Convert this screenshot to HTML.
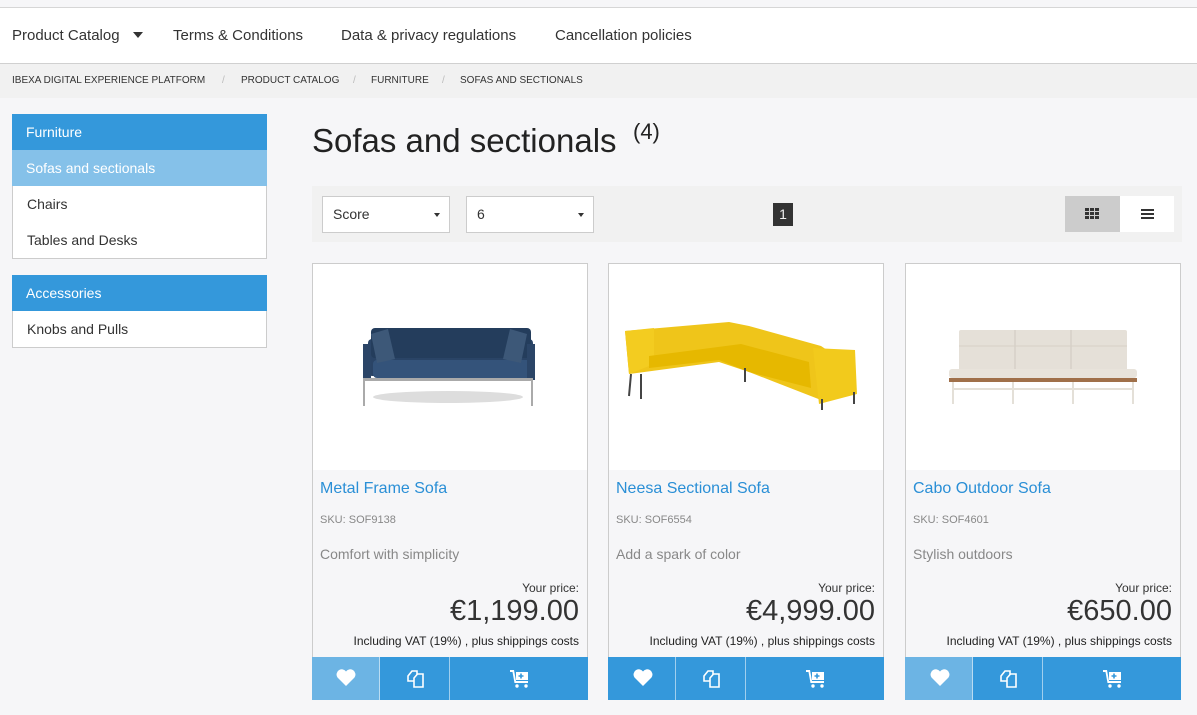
<!DOCTYPE html>
<html><head><meta charset="utf-8"><style>
*{box-sizing:border-box;margin:0;padding:0}
body{width:1197px;height:715px;overflow:hidden;background:#f6f6f8;font-family:"Liberation Sans",sans-serif;color:#333;position:relative}
.a{position:absolute}
.top{left:0;width:1197px;background:#fff;border-top:1px solid #d6d6d6;top:7px;height:57px;border-bottom:1px solid #d0d0d0}
.nav{top:27px;font-size:15px;color:#333}
.bc{left:0;top:64px;width:1197px;height:34px;background:#f1f1f1;font-size:10px;color:#333}
.bc span{position:absolute;top:11px}
.sl{color:#bbb}
.side{left:12px;width:255px;border:1px solid #ccc;border-top:none;background:#fff}
.side div{height:36px;line-height:36px;padding-left:14px;font-size:14px;color:#333}
.side .h{background:#3498db;color:#fff;margin:0 -1px;padding-left:14px}
.side .s{background:#85c1e9;color:#fff;margin:0 -1px;padding-left:14px}
.tb{left:312px;top:186px;width:870px;height:56px;background:#f1f1f1}
.sel{top:196px;height:37px;border:1px solid #ccc;background:#fff;font-size:14px;line-height:35px;padding-left:10px}
.sel:after{content:"";position:absolute;right:9px;top:16px;border:3px solid transparent;border-top:4px solid #333}
.card{top:263px;width:276px;height:437px;border:1px solid #ccc;background:#f6f6f8}
.img{position:absolute;left:0;top:0;width:274px;height:206px;background:#fff}
.nm{position:absolute;left:7px;top:216px;font-size:16px;color:#2a8fd6}
.sku{position:absolute;left:7px;top:250px;font-size:11px;color:#888}
.ds{position:absolute;left:7px;top:282px;font-size:14px;color:#888}
.yp{position:absolute;right:8px;top:317px;font-size:12px;color:#333}
.pr{position:absolute;right:8px;top:331px;font-size:29px;color:#333}
.vat{position:absolute;right:8px;top:370px;font-size:12px;color:#222}
.btns{position:absolute;left:-1px;top:393px;width:276px;height:43px;background:#3498db}
.btns div{position:absolute;top:0;height:43px}
</style></head><body>
<div class="a top"></div>
<div class="a nav" style="left:12px">Product Catalog</div>
<div class="a" style="left:133px;top:32px;border:5px solid transparent;border-top:6px solid #333"></div>
<div class="a nav" style="left:173px">Terms &amp; Conditions</div>
<div class="a nav" style="left:341px">Data &amp; privacy regulations</div>
<div class="a nav" style="left:555px">Cancellation policies</div>
<div class="a bc"><span style="left:12px">IBEXA DIGITAL EXPERIENCE PLATFORM</span><span class="sl" style="left:222px">/</span><span style="left:241px">PRODUCT CATALOG</span><span class="sl" style="left:353px">/</span><span style="left:371px">FURNITURE</span><span class="sl" style="left:442px">/</span><span style="left:460px">SOFAS AND SECTIONALS</span></div>

<div class="a side" style="top:114px"><div class="h">Furniture</div><div class="s">Sofas and sectionals</div><div>Chairs</div><div>Tables and Desks</div></div>
<div class="a side" style="top:275px"><div class="h">Accessories</div><div>Knobs and Pulls</div></div>

<div class="a" style="left:312px;top:122px;font-size:33px;color:#222">Sofas and sectionals</div>
<div class="a" style="left:633px;top:119px;font-size:22px;color:#222">(4)</div>

<div class="a tb"></div>
<div class="a sel" style="left:322px;width:128px">Score</div>
<div class="a sel" style="left:466px;width:128px">6</div>
<div class="a" style="left:773px;top:203px;width:20px;height:23px;background:#333;color:#eee;font-size:14px;text-align:center;line-height:23px">1</div>
<div class="a" style="left:1065px;top:196px;width:55px;height:36px;background:#ccc"></div>
<div class="a" style="left:1120px;top:196px;width:54px;height:36px;background:#fff"></div>
<svg class="a" style="left:1085px;top:208px" width="15" height="12"><g fill="#333"><rect x="0" y="0" width="4" height="3"/><rect x="5" y="0" width="4" height="3"/><rect x="10" y="0" width="4" height="3"/><rect x="0" y="4" width="4" height="3"/><rect x="5" y="4" width="4" height="3"/><rect x="10" y="4" width="4" height="3"/><rect x="0" y="8" width="4" height="3"/><rect x="5" y="8" width="4" height="3"/><rect x="10" y="8" width="4" height="3"/></g></svg>
<svg class="a" style="left:1141px;top:209px" width="13" height="11"><g fill="#333"><rect y="0" width="13" height="2"/><rect y="4" width="13" height="2"/><rect y="8" width="13" height="2"/></g></svg>

<div class="a card" style="left:312px">
<div class="img"><svg width="274" height="206">
<ellipse cx="135" cy="133" rx="75" ry="6" fill="#ddd"/>
<rect x="55" y="75" width="165" height="37" rx="4" fill="#2a4466"/>
<rect x="58" y="64" width="160" height="30" rx="4" fill="#243d5c"/>
<rect x="60" y="96" width="158" height="18" rx="4" fill="#34537a"/>
<rect x="50" y="80" width="8" height="36" fill="#2b4567"/>
<rect x="214" y="80" width="8" height="36" fill="#2b4567"/>
<path d="M58 70 L75 65 L82 95 L64 99 Z" fill="#3d5878"/><path d="M214 70 L197 65 L190 95 L208 99 Z" fill="#3d5878"/>
<rect x="52" y="114" width="168" height="3" fill="#aaa"/>
<rect x="50" y="114" width="2" height="28" fill="#aaa"/><rect x="218" y="114" width="2" height="28" fill="#aaa"/>
</svg></div>
<div class="nm">Metal Frame Sofa</div><div class="sku">SKU: SOF9138</div><div class="ds">Comfort with simplicity</div>
<div class="yp">Your price:</div><div class="pr">€1,199.00</div><div class="vat">Including VAT (19%) , plus shippings costs</div>
<div class="btns"><div style="left:0;width:68px;background:#6cb4e4;border-right:1px solid #fff8"></div><div style="left:68px;width:70px;border-right:1px solid #fff8"></div></div>
</div>
<div class="a card" style="left:608px">
<div class="img"><svg width="274" height="206">
<path d="M16 67 L120 58 L140 62 L212 82 L218 86 L218 128 L212 136 L140 108 L110 98 L20 110 Z" fill="#efc51a"/>
<path d="M16 67 L45 64 L45 100 L20 110 Z" fill="#f3cc20"/>
<path d="M40 92 L132 80 L200 98 L202 124 L140 108 L110 96 L40 104 Z" fill="#e6b800"/>
<path d="M204 84 L246 86 L248 130 L210 140 Z" fill="#f2ca1c"/>
<g stroke="#444" stroke-width="2"><line x1="22" y1="110" x2="20" y2="132"/><line x1="32" y1="110" x2="32" y2="135"/><line x1="136" y1="104" x2="136" y2="118"/><line x1="213" y1="135" x2="213" y2="146"/><line x1="245" y1="128" x2="245" y2="140"/></g>
</svg></div>
<div class="nm">Neesa Sectional Sofa</div><div class="sku">SKU: SOF6554</div><div class="ds">Add a spark of color</div>
<div class="yp">Your price:</div><div class="pr">€4,999.00</div><div class="vat">Including VAT (19%) , plus shippings costs</div>
<div class="btns"><div style="left:0;width:68px;border-right:1px solid #fff8"></div><div style="left:68px;width:70px;border-right:1px solid #fff8"></div></div>
</div>
<div class="a card" style="left:905px">
<div class="img"><svg width="274" height="206">
<rect x="53" y="66" width="168" height="42" rx="2" fill="#e5e0d8"/>
<line x1="109" y1="66" x2="109" y2="108" stroke="#cfc9bf"/><line x1="165" y1="66" x2="165" y2="108" stroke="#cfc9bf"/>
<line x1="53" y1="82" x2="221" y2="82" stroke="#d6d0c6"/>
<rect x="43" y="105" width="188" height="9" rx="3" fill="#e8e3db"/>
<rect x="43" y="114" width="188" height="4" fill="#a0704a"/>
<g stroke="#e4e0d8" stroke-width="2"><line x1="47" y1="118" x2="47" y2="140"/><line x1="107" y1="118" x2="107" y2="140"/><line x1="167" y1="118" x2="167" y2="140"/><line x1="227" y1="118" x2="227" y2="140"/><line x1="47" y1="125" x2="227" y2="125"/></g>
</svg></div>
<div class="nm">Cabo Outdoor Sofa</div><div class="sku">SKU: SOF4601</div><div class="ds">Stylish outdoors</div>
<div class="yp">Your price:</div><div class="pr">€650.00</div><div class="vat">Including VAT (19%) , plus shippings costs</div>
<div class="btns"><div style="left:0;width:68px;background:#6cb4e4;border-right:1px solid #fff8"></div><div style="left:68px;width:70px;border-right:1px solid #fff8"></div></div>
</div>

<svg width="0" height="0" style="position:absolute"><defs>
<g id="hrt"><path d="M11 19 L2.5 10.5 A4.8 4.8 0 0 1 11 4.5 A4.8 4.8 0 0 1 19.5 10.5 Z" fill="#fff"/></g>
<g id="cp" fill="none" stroke="#fff" stroke-width="1.6"><path d="M3 8 L7 3 H12 V13 H3 Z"/><path d="M9 10 L12.5 6 H18 V19 H9 Z" fill="#3498db"/></g>
<g id="ct" fill="#fff"><path d="M1 2 H5 L7 13 H19 V15 H5.5 L3.5 4 H1 Z"/><rect x="7" y="4" width="12" height="8"/><circle cx="8" cy="18" r="1.7"/><circle cx="17" cy="18" r="1.7"/><path d="M12 5.5 V10.5 M9.5 8 H14.5" stroke="#3498db" stroke-width="1.6"/></g>
</defs></svg>
<svg class="a" style="left:335px;top:667px" width="22" height="22"><use href="#hrt"/></svg>
<svg class="a" style="left:632px;top:667px" width="22" height="22"><use href="#hrt"/></svg>
<svg class="a" style="left:929px;top:667px" width="22" height="22"><use href="#hrt"/></svg>
<svg class="a" style="left:405px;top:668px" width="22" height="22"><use href="#cp"/></svg>
<svg class="a" style="left:701px;top:668px" width="22" height="22"><use href="#cp"/></svg>
<svg class="a" style="left:998px;top:668px" width="22" height="22"><use href="#cp"/></svg>
<svg class="a" style="left:509px;top:668px" width="22" height="22"><use href="#ct"/></svg>
<svg class="a" style="left:805px;top:668px" width="22" height="22"><use href="#ct"/></svg>
<svg class="a" style="left:1102px;top:668px" width="22" height="22"><use href="#ct"/></svg>
</body></html>
